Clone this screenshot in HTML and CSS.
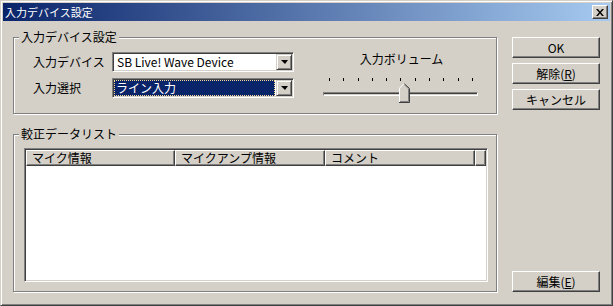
FILE: index.html
```html
<!DOCTYPE html>
<html lang="ja">

<head>
    <meta charset="UTF-8">
    <title>入力デバイス設定</title>
    <link rel="stylesheet" href="styles.css">
</head>

<body>
    <div class="window">
        <!-- Barra de título -->
        <div class="titlebar">
            <span class="title">入力デバイス設定</span>
            <span class="close-btn">
                <svg width="8" height="7" viewBox="0 0 8 7">
                    <path d="M0 0h2l2 2.5L6 0h2L5 3.5 8 7H6L4 4.5 2 7H0l3-3.5z" fill="#000"/>
                </svg>
            </span>
        </div>

        <div class="client">
            <div class="main-col">
                <!-- Grupo de dispositivo -->
                <fieldset class="group">
                    <legend>入力デバイス設定</legend>
                    <div class="device-row">
                        <div class="device-form">
                            <label>入力デバイス</label>
                            <div class="combo">
                                <span class="combo-text">SB Live! Wave Device</span>
                                <span class="combo-btn"><i class="arrow"></i></span>
                            </div>
                            <label>入力選択</label>
                            <div class="combo">
                                <span class="combo-text selected">ライン入力</span>
                                <span class="combo-btn"><i class="arrow"></i></span>
                            </div>
                        </div>

                        <div class="volume">
                            <div class="volume-label">入力ボリューム</div>
                            <div class="ticks">
                                <i></i><i></i><i></i><i></i><i></i><i></i><i></i><i></i><i></i><i></i><i></i>
                            </div>
                            <div class="slider">
                                <div class="track"></div>
                                <svg class="thumb" width="11" height="20" viewBox="0 0 11 20">
                                    <polygon points="0,5 5,0 10,5 10,19 0,19" fill="#d4d0c8"/>
                                    <polyline points="0.5,19 0.5,5.2 5.2,0.5" fill="none" stroke="#fff"/>
                                    <polyline points="5.3,0.7 10.5,5.5 10.5,19.5 0,19.5" fill="none" stroke="#404040"/>
                                    <polyline points="5.5,1.8 9.5,5.8 9.5,18.5 1,18.5" fill="none" stroke="#808080"/>
                                </svg>
                            </div>
                        </div>
                    </div>
                </fieldset>

                <!-- Lista de calibración -->
                <fieldset class="group group-list">
                    <legend>較正データリスト</legend>
                    <div class="list-wrap">
                        <div class="listview">
                            <div class="list-header">
                                <div class="col">マイク情報</div>
                                <div class="col">マイクアンプ情報</div>
                                <div class="col">コメント</div>
                                <div class="col col-fill"></div>
                            </div>
                            <div class="list-body"></div>
                        </div>
                    </div>
                </fieldset>
            </div>

            <!-- Botones -->
            <div class="btn-col">
                <button>OK</button>
                <button>解除(<u>R</u>)</button>
                <button>キャンセル</button>
                <button class="btn-edit">編集(<u>E</u>)</button>
            </div>
        </div>
    </div>
</body>

</html>
```

FILE: styles.css
```css
* {
    box-sizing: border-box;
}

body {
    margin: 0;
    background: #d4d0c8;
    font-family: "Noto Sans CJK JP", "Liberation Sans", sans-serif;
    font-size: 12px;
    line-height: 14px;
    color: #000;
}

/* Ventana */
.window {
    width: 613px;
    height: 306px;
    border: 1px solid;
    border-color: #d4d0c8 #404040 #404040 #d4d0c8;
    box-shadow: inset 1px 1px 0 #fff, inset -1px -1px 0 #808080;
    padding: 2px;
    display: flex;
    flex-direction: column;
}

.titlebar {
    height: 18px;
    background: linear-gradient(to right, #0a246a, #a6caf0);
    color: #fff;
    display: flex;
    align-items: center;
    justify-content: space-between;
    padding: 0 2px 0 2px;
}

.title {
    font-size: 11px;
}

.close-btn {
    width: 16px;
    height: 14px;
    background: #d4d0c8;
    border: 1px solid;
    border-color: #fff #404040 #404040 #fff;
    box-shadow: inset -1px -1px 0 #808080;
    display: flex;
    align-items: center;
    justify-content: center;
    padding-right: 1px;
}

.client {
    flex: 1;
    display: flex;
    padding: 9px 10px 11px 10px;
}

.main-col {
    width: 484px;
    display: flex;
    flex-direction: column;
}

/* Grupos */
.group {
    margin: 0;
    padding: 0;
    min-width: 0;
    border: 1px solid #808080;
    box-shadow: 1px 1px 0 #fff, inset 1px 1px 0 #fff;
}

.group legend {
    margin-left: 5px;
    padding: 0 2px;
    line-height: 14px;
    background: #d4d0c8;
}

.group-list {
    flex: 1;
    margin-top: 13px;
    display: flex;
    flex-direction: column;
}

.device-row {
    display: flex;
    align-items: flex-start;
    padding: 8px 0 15px 19px;
}

.device-form {
    display: grid;
    grid-template-columns: 79px 182px;
    grid-auto-rows: 20px;
    row-gap: 6px;
    align-items: center;
}

/* Combo */
.combo {
    height: 20px;
    display: flex;
    background: #fff;
    border: 1px solid;
    border-color: #808080 #fff #fff #808080;
    box-shadow: inset 1px 1px 0 #404040, inset -1px -1px 0 #d4d0c8;
    padding: 2px 1px 1px 3px;
}

.combo-text {
    flex: 1;
    line-height: 14px;
    padding-left: 1px;
}

.combo-text.selected {
    background: #0a246a;
    color: #fff;
    border: 1px dotted #f5db95;
    margin: -1px 1px 0 -2px;
    padding-left: 1px;
}

.combo-btn {
    width: 16px;
    height: 16px;
    margin-top: -1px;
    background: #d4d0c8;
    border: 1px solid;
    border-color: #d4d0c8 #404040 #404040 #d4d0c8;
    box-shadow: inset 1px 1px 0 #fff, inset -1px -1px 0 #808080;
    display: flex;
    align-items: center;
    justify-content: center;
}

.arrow {
    width: 0;
    height: 0;
    border-left: 4px solid transparent;
    border-right: 3px solid transparent;
    border-top: 4px solid #000;
}

/* Volumen: la ranura sobresale por debajo del formulario */
.volume {
    width: 155px;
    height: 46px;
    margin-left: 29px;
}

.volume-label {
    text-align: center;
    padding-left: 2px;
}

.ticks {
    display: flex;
    justify-content: space-between;
    height: 3px;
    margin-top: 12px;
    padding: 0 5px 0 6px;
}

.ticks i {
    width: 1px;
    height: 3px;
    background: #000;
}

.slider {
    position: relative;
    height: 20px;
    margin-top: 2px;
    padding-top: 9px;
}

.track {
    height: 4px;
    border: 1px solid;
    border-color: #808080 #fff #fff #808080;
    box-shadow: inset 0 1px 0 #404040;
}

.thumb {
    position: absolute;
    left: 76px;
    top: 0;
}

/* Lista */
.list-wrap {
    flex: 1;
    display: flex;
    padding: 7px 8px 9px 10px;
}

.listview {
    flex: 1;
    display: flex;
    flex-direction: column;
    background: #fff;
    border: 1px solid;
    border-color: #808080 #fff #fff #808080;
    box-shadow: inset 1px 1px 0 #404040, inset -1px -1px 0 #d4d0c8;
    padding: 1px;
}

.list-header {
    display: flex;
    height: 16px;
}

.col {
    width: 150px;
    height: 16px;
    background: #d4d0c8;
    border: 1px solid;
    border-color: #fff #404040 #404040 #fff;
    box-shadow: inset -1px -1px 0 #808080;
    padding-left: 5px;
    line-height: 13px;
}

.col:first-child {
    width: 149px;
}

.col-fill {
    flex: 1;
    width: auto;
}

/* Botones */
.btn-col {
    width: 88px;
    margin-left: 15px;
    padding-top: 7px;
    display: flex;
    flex-direction: column;
    gap: 5px;
}

button {
    height: 21px;
    padding: 0;
    font: inherit;
    color: #000;
    background: #d4d0c8;
    border: 1px solid;
    border-color: #fff #404040 #404040 #fff;
    box-shadow: inset -1px -1px 0 #808080;
}

button u {
    text-underline-offset: 1px;
}

.btn-edit {
    margin-top: auto;
}
```
